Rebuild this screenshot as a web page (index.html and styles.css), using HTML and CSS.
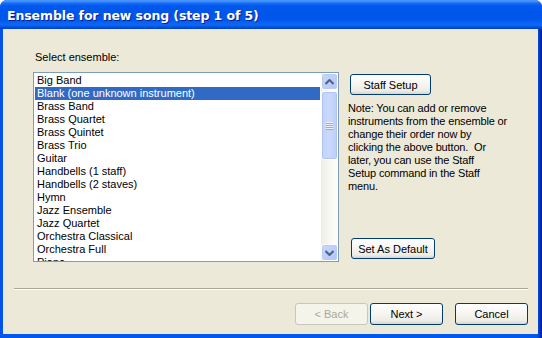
FILE: index.html
```html
<!DOCTYPE html>
<html>
<head>
<meta charset="utf-8">
<link rel="stylesheet" href="styles.css">
</head>
<body>
<div class="window">
  <div class="titlebar"><span class="title">Ensemble for new song (step 1 of 5)</span></div>
  <div class="client">
    <div class="main">
      <div class="leftcol">
        <div class="label">Select ensemble:</div>
        <div class="listbox">
          <div class="items">
            <div class="item">Big Band</div>
            <div class="item sel">Blank (one unknown instrument)</div>
            <div class="item">Brass Band</div>
            <div class="item">Brass Quartet</div>
            <div class="item">Brass Quintet</div>
            <div class="item">Brass Trio</div>
            <div class="item">Guitar</div>
            <div class="item">Handbells (1 staff)</div>
            <div class="item">Handbells (2 staves)</div>
            <div class="item">Hymn</div>
            <div class="item">Jazz Ensemble</div>
            <div class="item">Jazz Quartet</div>
            <div class="item">Orchestra Classical</div>
            <div class="item">Orchestra Full</div>
            <div class="item">Piano</div>
          </div>
          <div class="scrollbar">
            <div class="sbtn"><svg width="9" height="6" viewBox="0 0 9 6"><path d="M0.5 5 L4.5 1 L8.5 5" fill="none" stroke="#4d6185" stroke-width="2"/></svg></div>
            <div class="track">
              <div class="thumb"><div class="grip"><i></i><i></i><i></i><i></i></div></div>
            </div>
            <div class="sbtn"><svg width="9" height="6" viewBox="0 0 9 6"><path d="M0.5 1 L4.5 5 L8.5 1" fill="none" stroke="#4d6185" stroke-width="2"/></svg></div>
          </div>
        </div>
      </div>
      <div class="rightcol">
        <button class="btn side staff">Staff Setup</button>
        <p class="note">Note: You can add or remove<br>instruments from the ensemble or<br>change their order now by<br>clicking the above button.&nbsp; Or<br>later, you can use the Staff<br>Setup command in the Staff<br>menu.</p>
        <button class="btn side def">Set As Default</button>
      </div>
    </div>
    <div class="sep"></div>
    <div class="footer">
      <button class="btn wide disabled">&lt; Back</button>
      <button class="btn wide next">Next &gt;</button>
      <button class="btn wide cancel">Cancel</button>
    </div>
  </div>
</div>
</body>
</html>
```

FILE: styles.css
```css
* { box-sizing: border-box; }
html, body { margin: 0; padding: 0; background: #ffffff; }
body { font-family: "Liberation Sans", Arial, sans-serif; font-size: 11px; color: #000; }

.window {
  width: 542px;
  height: 338px;
  display: flex;
  flex-direction: column;
  border-radius: 7px 7px 0 0;
  overflow: hidden;
  background: linear-gradient(90deg, #0a4ee8 0, #0058ee 3px, #0058ee 537px, #0033b8 540px, #001c8c 542px);
}

.titlebar {
  height: 29px;
  flex: none;
  display: flex;
  align-items: center;
  padding-left: 7px;
  padding-top: 1px;
  background: linear-gradient(180deg,
    #3c8cf7 0, #4a9bff 1px, #1a6df5 3px, #0058ee 6px,
    #0055e9 14px, #0057ec 20px, #0b63f4 23px, #0f67f6 25px, #0053e2 27px, #003ec8 29px);
}
.title {
  color: #fff;
  font-family: "DejaVu Sans", sans-serif;
  font-weight: bold;
  font-size: 12.5px;
  letter-spacing: -0.1px;
  text-shadow: 1px 1px 0 #0a1e8c;
}

.client {
  flex: 1;
  margin: 0 4px 4px 3px;
  background: #ece9d8;
  padding-top: 22px;
  display: flex;
  flex-direction: column;
}

.main {
  display: flex;
  padding-left: 30px;
}
.leftcol { width: 306px; }
.label { line-height: 13px; height: 13px; margin-bottom: 8px; padding-left: 2px; }

.listbox {
  height: 190px;
  border: 1px solid #7f9db9;
  background: #fff;
  display: flex;
}
.items {
  flex: 1;
  overflow: hidden;
  padding: 1px 1px 0 1px;
}
.item {
  height: 13px;
  line-height: 13px;
  padding-left: 2px;
  white-space: nowrap;
}
.item.sel { background: #316ac5; color: #fff; }

.scrollbar {
  width: 17px;
  flex: none;
  display: flex;
  flex-direction: column;
  background: linear-gradient(90deg, #eeede5, #f7f7f3 50%, #fdfdfa);
}
.sbtn {
  width: 17px;
  height: 17px;
  flex: none;
  border: 1px solid #fff;
  border-radius: 3px;
  background: linear-gradient(135deg, #c7d6fd, #bccdf9 60%, #b0c3f4);
  box-shadow: inset 0 0 0 1px #b8cbf6;
  display: flex;
  align-items: center;
  justify-content: center;
}
.track { flex: 1; padding-top: 1px; }
.thumb {
  height: 69px;
  border: 1px solid #fff;
  border-radius: 3px;
  background: linear-gradient(90deg, #c4d3fb, #c9d9fd 50%, #bccdf8);
  box-shadow: inset 0 0 0 1px #b0c3f2;
  display: flex;
  align-items: center;
  justify-content: center;
}
.grip { display: flex; flex-direction: column; gap: 1px; }
.grip i { display: block; width: 7px; height: 1px; background: #eef3fe; box-shadow: 0 1px 0 #8caaf0; }

.rightcol {
  padding-left: 11px;
  padding-top: 23px;
  display: flex;
  flex-direction: column;
  align-items: flex-start;
}

.btn {
  font-family: "Liberation Sans", Arial, sans-serif;
  font-size: 11px;
  color: #000;
  border: 1px solid #003c74;
  border-radius: 3px;
  background: linear-gradient(180deg, #ffffff 0, #f6f5f1 50%, #ecebe4 85%, #d8d5c8 100%);
  padding: 0;
  margin: 0;
}
.btn.side { height: 21px; }
.staff { width: 81px; }
.def { width: 84px; margin-top: 45px; margin-left: 1px; }

.note {
  margin: 7px 0 0 -2px;
  line-height: 13px;
  white-space: nowrap;
  letter-spacing: -0.15px;
}

.sep {
  margin: 26px 10px 0 11px;
  height: 2px;
  border-top: 1px solid #aca899;
  border-bottom: 1px solid #fff;
}

.footer {
  display: flex;
  justify-content: flex-end;
  padding: 13px 10px 0 0;
}
.btn.wide { width: 73px; height: 22px; }
.btn.disabled { color: #aca899; border-color: #c9c7ba; background: #f5f4ea; }
.next { margin-left: 2px; }
.cancel { margin-left: 12px; }
```
